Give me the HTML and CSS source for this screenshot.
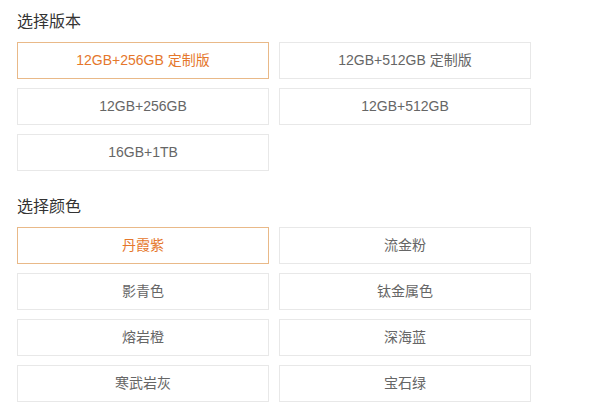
FILE: index.html
```html
<!DOCTYPE html>
<html lang="zh-CN">
<head>
    <meta charset="UTF-8">
    <meta name="viewport" content="width=device-width, initial-scale=1.0">
    <title>选择版本</title>
    <link rel="stylesheet" href="styles.css">
</head>
<body>
    <div class="product-options">
        <div class="option-group">
            <h2 class="option-title">选择版本</h2>
            <div class="option-list">
                <div class="option-item active">12GB+256GB 定制版</div>
                <div class="option-item">12GB+512GB 定制版</div>
                <div class="option-item">12GB+256GB</div>
                <div class="option-item">12GB+512GB</div>
                <div class="option-item">16GB+1TB</div>
            </div>
        </div>

        <div class="option-group">
            <h2 class="option-title">选择颜色</h2>
            <div class="option-list">
                <div class="option-item active">丹霞紫</div>
                <div class="option-item">流金粉</div>
                <div class="option-item">影青色</div>
                <div class="option-item">钛金属色</div>
                <div class="option-item">熔岩橙</div>
                <div class="option-item">深海蓝</div>
                <div class="option-item">寒武岩灰</div>
                <div class="option-item">宝石绿</div>
            </div>
        </div>
    </div>
</body>
</html>
```

FILE: styles.css
```css
* {
    margin: 0;
    padding: 0;
    box-sizing: border-box;
    font-family: "Liberation Sans", "Noto Sans CJK SC", sans-serif;
}

body {
    background-color: #fff;
}

.product-options {
    padding: 10px 0 0 17px;
}

.option-group + .option-group {
    margin-top: 24px;
}

.option-title {
    font-size: 16px;
    font-weight: normal;
    line-height: 24px;
    color: #333;
    margin-bottom: 8px;
}

.option-list {
    display: grid;
    grid-template-columns: 252px 252px;
    column-gap: 10px;
    row-gap: 9px;
}

.option-item {
    height: 37px;
    line-height: 35px;
    border: 1px solid #e8e8e8;
    text-align: center;
    font-size: 14px;
    color: #666;
    cursor: pointer;
}

.option-item.active {
    border-color: #e9b988;
    color: #e5772c;
}
```
